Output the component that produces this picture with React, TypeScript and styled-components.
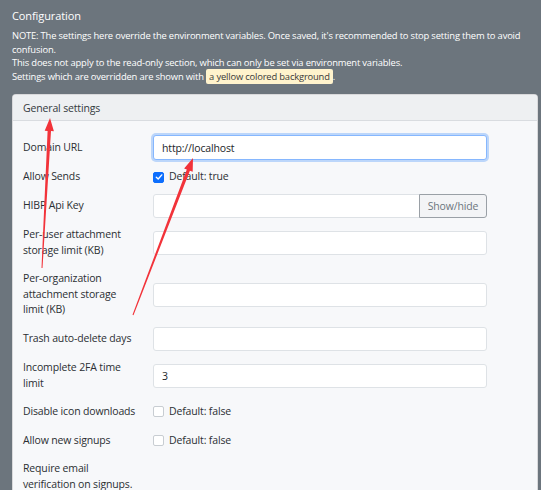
import React from "react";
import styled, { createGlobalStyle, css } from "styled-components";

const Global = createGlobalStyle`
  html, body { margin: 0; padding: 0; background: #6c757d; }
  body { font-family: "Open Sans", "Noto Sans", sans-serif; }
  * { box-sizing: border-box; }
`;

const Page = styled.div`
  position: relative;
  width: 541px;
  height: 490px;
  overflow: hidden;
  background: #6c757d;
  padding: 7px 3px 0 12px;
`;

const Title = styled.h5`
  margin: 0 0 5px;
  font-size: 11px;
  letter-spacing: -0.1px;
  line-height: 17px;
  font-weight: 400;
  color: #fff;
`;

const Note = styled.div`
  font-size: 9.4px;
  letter-spacing: -0.17px;
  line-height: 13.6px;
  color: #fff;
  white-space: nowrap;
`;

const Mark = styled.span`
  background: #fff3cd;
  color: #3a3a3a;
  padding: 1px 3px;
  border-radius: 2px;
`;

const Card = styled.section`
  margin-top: 11px;
  border: 1px solid rgba(0, 0, 0, 0.12);
  border-radius: 4px;
  background: #f7f8fa;
  overflow: hidden;
`;

const CardHeader = styled.div`
  height: 26px;
  display: flex;
  align-items: center;
  padding: 0 10px;
  background: #eef0f2;
  border-bottom: 1px solid #d9dce0;
  font-size: 10.5px;
  letter-spacing: -0.15px;
  color: #343a40;
`;

const CardBody = styled.div`
  padding: 14px 10px 20px;
  display: flex;
  flex-direction: column;
  gap: 5px;
  font-size: 10.5px;
  letter-spacing: -0.15px;
`;

const Row = styled.div`
  display: grid;
  grid-template-columns: 130px 334px;
  align-items: center;
`;

const Label = styled.label`
  line-height: 15.6px;
  padding: 4px 16px 4px 0;
  color: #2b2f33;
`;

const Input = styled.input<{ $focused?: boolean; $grouped?: boolean }>`
  width: 100%;
  height: 24px;
  margin: 0;
  padding: 0 8px;
  font-family: inherit;
  font-size: 10.5px;
  letter-spacing: -0.15px;
  color: #212529;
  background: #fff;
  border: 1px solid #dee2e6;
  border-radius: 3px;
  outline: none;
  ${(p) =>
    p.$focused &&
    css`
      height: 25px;
      border-color: #86b7fe;
      box-shadow: 0 0 0 2px rgba(13, 110, 253, 0.25);
    `}
  ${(p) =>
    p.$grouped &&
    css`
      border-top-right-radius: 0;
      border-bottom-right-radius: 0;
    `}
`;

const Group = styled.div`
  display: flex;
`;

const GroupButton = styled.button`
  flex: 0 0 68px;
  height: 24px;
  margin-left: -1px;
  font-family: inherit;
  font-size: 10.5px;
  letter-spacing: -0.15px;
  color: #6c757d;
  background: #f3f4f6;
  border: 1px solid #9aa0a6;
  border-radius: 0 3px 3px 0;
  padding: 0;
`;

const CheckWrap = styled.div`
  display: flex;
  align-items: center;
  gap: 5px;
  color: #2b2f33;
  line-height: 15.5px;
`;

const Box = styled.span<{ $checked?: boolean }>`
  width: 11px;
  height: 11px;
  border-radius: 2px;
  display: inline-flex;
  align-items: center;
  justify-content: center;
  border: 1px solid ${(p) => (p.$checked ? "#0d6efd" : "#c8cdd2")};
  background: ${(p) => (p.$checked ? "#0d6efd" : "#fff")};
`;

const Overlay = styled.svg`
  position: absolute;
  left: 0;
  top: 0;
  pointer-events: none;
`;

function arrowPoints(tx: number, ty: number, hx: number, hy: number) {
  const dx = hx - tx;
  const dy = hy - ty;
  const len = Math.hypot(dx, dy);
  const ux = dx / len;
  const uy = dy / len;
  const nx = -uy;
  const ny = ux;
  const headLen = 13;
  const headW = 4.6;
  const bx = hx - ux * headLen;
  const by = hy - uy * headLen;
  const shaftW = 1.7;
  const tailW = 0.5;
  const pts: [number, number][] = [
    [tx + nx * tailW, ty + ny * tailW],
    [bx + nx * shaftW, by + ny * shaftW],
    [bx + nx * headW, by + ny * headW],
    [hx, hy],
    [bx - nx * headW, by - ny * headW],
    [bx - nx * shaftW, by - ny * shaftW],
    [tx - nx * tailW, ty - ny * tailW],
  ];
  return pts.map((p) => p.map((v) => v.toFixed(1)).join(",")).join(" ");
}

const Check = ({ checked, text }: { checked?: boolean; text: string }) => (
  <CheckWrap>
    <Box $checked={checked}>
      {checked && (
        <svg width="8" height="8" viewBox="0 0 8 8">
          <path d="M1.3 4.2 L3.2 6 L6.8 1.9" fill="none" stroke="#fff" strokeWidth="1.4" strokeLinecap="round" strokeLinejoin="round" />
        </svg>
      )}
    </Box>
    <span>{text}</span>
  </CheckWrap>
);

export default function App() {
  return (
    <>
      <Global />
      <Page>
        <Title>Configuration</Title>
        <Note>
          NOTE: The settings here override the environment variables. Once saved, it's recommended to stop setting them to avoid
          <br />
          confusion.
          <br />
          This does not apply to the read-only section, which can only be set via environment variables.
          <br />
          Settings which are overridden are shown with <Mark>a yellow colored background</Mark>.
        </Note>
        <Card>
          <CardHeader>General settings</CardHeader>
          <CardBody>
            <Row>
              <Label>Domain URL</Label>
              <Input $focused defaultValue="http://localhost" />
            </Row>
            <Row>
              <Label>Allow Sends</Label>
              <Check checked text="Default: true" />
            </Row>
            <Row>
              <Label>HIBP Api Key</Label>
              <Group>
                <Input $grouped />
                <GroupButton>Show/hide</GroupButton>
              </Group>
            </Row>
            <Row>
              <Label>Per-user attachment storage limit (KB)</Label>
              <Input />
            </Row>
            <Row>
              <Label>Per-organization attachment storage limit (KB)</Label>
              <Input />
            </Row>
            <Row>
              <Label>Trash auto-delete days</Label>
              <Input />
            </Row>
            <Row>
              <Label>Incomplete 2FA time limit</Label>
              <Input defaultValue="3" />
            </Row>
            <Row>
              <Label>Disable icon downloads</Label>
              <Check text="Default: false" />
            </Row>
            <Row>
              <Label>Allow new signups</Label>
              <Check text="Default: false" />
            </Row>
            <Row>
              <Label>Require email verification on signups.</Label>
              <div />
            </Row>
          </CardBody>
        </Card>
        <Overlay width="541" height="490" viewBox="0 0 541 490">
          <polygon points={arrowPoints(42, 268, 50, 118)} fill="#f2333a" />
          <polygon points={arrowPoints(133, 315, 193, 158)} fill="#f2333a" />
        </Overlay>
      </Page>
    </>
  );
}
